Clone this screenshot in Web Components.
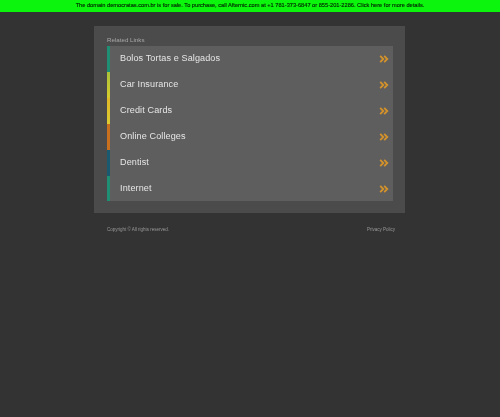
<!DOCTYPE html>
<html><head><meta charset="utf-8"><style>
html,body{margin:0;padding:0;background:#333;height:100%;overflow:hidden}
body{font-family:"Liberation Sans",Arial,sans-serif;}
</style></head><body>
<sale-bar>The domain democratas.com.br is for sale. To purchase, call Afternic.com at +1 781-373-6847 or 855-201-2286. Click here for more details.</sale-bar>
<link-panel heading="Related Links">
<link-row color="#1f8f74">Bolos Tortas e Salgados</link-row>
<link-row color="linear-gradient(#a9c23a,#d8cc2c)">Car Insurance</link-row>
<link-row color="linear-gradient(#e0b828,#dccb30)">Credit Cards</link-row>
<link-row color="#c9701f">Online Colleges</link-row>
<link-row color="#1a5a70">Dentist</link-row>
<link-row color="#1f8f74">Internet</link-row>
</link-panel>
<page-foot></page-foot>
<script>
function def(name,html,init){customElements.define(name,class extends HTMLElement{constructor(){super();this.attachShadow({mode:'open'}).innerHTML=html;}connectedCallback(){init&&init(this);}});}
def('sale-bar',`<style>:host{display:block;height:12px;background:#0cf50c;color:#022002;font-size:5.67px;line-height:11px;text-align:center;white-space:nowrap;filter:blur(.45px);-webkit-text-stroke:.12px #022002}</style><slot></slot>`);
def('link-panel',`<style>:host{display:block;box-sizing:border-box;width:311px;height:187px;margin:14px 0 0 94px;background:#4b4b4b;padding:10px 12px 12px 13px;filter:blur(.55px)}
h2{margin:0;height:10px;font-weight:normal;font-size:6.2px;line-height:8px;color:#a8a8a8}
.list{display:block;background:#5e5e5e;height:155px;overflow:hidden}</style><h2></h2><div class="list"><slot></slot></div>`,e=>{e.shadowRoot.querySelector('h2').textContent=e.getAttribute('heading')});
def('link-row',`<style>:host{display:flex;align-items:center;height:26px;box-sizing:border-box;position:relative;padding:0 4px 0 13px;color:#e6e6e6;font-size:9.05px;letter-spacing:.12px}
.b{position:absolute;left:0;top:0;bottom:0;width:3px;background:var(--c)}
.t{flex:1;white-space:nowrap;position:relative;top:-1px}svg{width:10px;height:8px;display:block;position:relative;top:-.5px}</style><i class="b"></i><span class="t"><slot></slot></span>
<svg viewBox="0 0 10 8"><path d="M1.2 .8 4.3 4 1.2 7.2M5.2 .8 8.3 4 5.2 7.2" fill="none" stroke="#d4922a" stroke-width="1.8"/></svg>`,e=>{e.style.setProperty('--c',e.getAttribute('color'))});
def('page-foot',`<style>:host{display:flex;justify-content:space-between;width:288px;margin:14px 0 0 107px;font-size:4.5px;line-height:6px;color:#999;filter:blur(.4px)}</style><span>Copyright © All rights reserved.</span><span>Privacy Policy</span>`);
</script>
</body></html>
